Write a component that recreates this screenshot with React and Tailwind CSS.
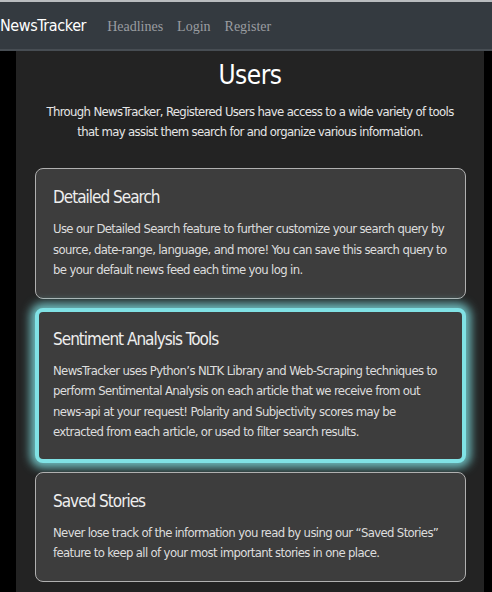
import React from 'react';

const cards = [
  {
    title: 'Detailed Search',
    body: 'Use our Detailed Search feature to further customize your search query by source, date-range, language, and more! You can save this search query to be your default news feed each time you log in.',
  },
  {
    title: 'Sentiment Analysis Tools',
    body: "NewsTracker uses Python\u2019s NLTK Library and Web-Scraping techniques to perform Sentimental Analysis on each article that we receive from out news-api at your request! Polarity and Subjectivity scores may be extracted from each article, or used to filter search results.",
    glow: true,
  },
  {
    title: 'Saved Stories',
    body: 'Never lose track of the information you read by using our \u201cSaved Stories\u201d feature to keep all of your most important stories in one place.',
  },
];

export default function App() {
  return (
    <div className="min-h-[592px] bg-black font-['DejaVu_Sans_Condensed','DejaVu_Sans',sans-serif]">
      <nav className="h-[51px] bg-[#343a40] border-t-2 border-[#b9bcbf] border-b-2 border-b-[#474d53] flex items-center">
        <span className="text-[16px] tracking-[-0.4px] text-white mr-[21px]">NewsTracker</span>
        <div className="flex gap-[14px] font-['Liberation_Serif',serif] text-[14px] text-[#9a9da0] pt-[1px]">
          <a>Headlines</a>
          <a>Login</a>
          <a>Register</a>
        </div>
      </nav>
      <main className="ml-[16px] mr-[8px] bg-[#232323] pb-[12px] min-h-[541px]">
        <h1 className="text-center text-white text-[26px] tracking-[-0.5px] leading-[32px] pt-[8px]">Users</h1>
        <p className="text-center text-[#e6e6e6] text-[13px] tracking-[-0.65px] leading-[20px] mt-[11px] px-[24px]">
          Through NewsTracker, Registered Users have access to a wide variety of tools that may assist them search for and organize various information.
        </p>
        <div className="flex flex-col gap-[9px] mt-[26px] pl-[19px] pr-[18px]">
          {cards.map((c) => (
            <div
              key={c.title}
              className={
                c.glow
                  ? 'rounded-[8px] bg-[#3d3d3d] border-[4px] border-[#80e2e5] shadow-[0_0_10px_5px_rgba(127,225,228,0.8)] pl-[14px] pr-[20px] pt-[15px] pb-[16px]'
                  : 'rounded-[8px] bg-[#3d3d3d] border border-[#b0b0b0] px-[17px] pt-[16px] pb-[17px]'
              }
            >
              <h2 className="text-[17px] tracking-[-1px] leading-[24px] text-[#eeeeee]">{c.title}</h2>
              <p className="text-[13px] tracking-[-0.65px] leading-[20.5px] text-[#dddddd] mt-[10px]">{c.body}</p>
            </div>
          ))}
        </div>
      </main>
    </div>
  );
}
